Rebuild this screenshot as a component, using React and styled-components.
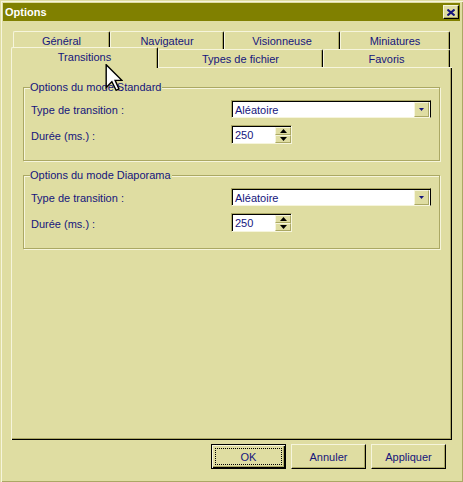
import React from "react";
import styled, { createGlobalStyle } from "styled-components";

const face = "#dfdda2";
const light = "#f6f5dc";
const shadow = "#aba864";
const dark = "#000";
const ink = "#15157c";

const GlobalStyle = createGlobalStyle`
  html, body {
    margin: 0;
    padding: 0;
    background: ${face};
  }
  body {
    font-family: "Liberation Sans", Arial, sans-serif;
    font-size: 11px;
    color: ${ink};
  }
`;

const Window = styled.div`
  position: relative;
  width: 463px;
  height: 482px;
  box-sizing: border-box;
  padding: 3px;
  background: ${face};
  box-shadow: inset 1px 1px ${face}, inset 2px 2px ${light},
    inset -1px -1px ${shadow};
  display: flex;
  flex-direction: column;
`;

const TitleBar = styled.div`
  height: 18px;
  background: #808000;
  display: flex;
  align-items: center;
  justify-content: space-between;
  padding: 0 1px 0 2px;
`;

const Title = styled.span`
  color: #fff;
  font-weight: bold;
  font-size: 11px;
`;

const CloseButton = styled.div`
  width: 16px;
  height: 14px;
  box-sizing: border-box;
  background: ${face};
  border-top: 1px solid ${light};
  border-left: 1px solid ${light};
  border-right: 1px solid ${dark};
  border-bottom: 1px solid ${dark};
  box-shadow: inset -1px -1px ${shadow};
  display: flex;
  align-items: center;
  justify-content: center;
`;

const Body = styled.div`
  flex: 1;
  padding: 10px 8px 0 8px;
  display: flex;
  flex-direction: column;
`;

const TabRow = styled.div`
  display: flex;
  height: 18px;
  padding-left: ${(p) => p.$indent || 0}px;
  align-items: flex-start;
`;

const Tab = styled.div`
  position: relative;
  width: ${(p) => p.$w}px;
  height: ${(p) => (p.$active ? 21 : 18)}px;
  margin-top: ${(p) => (p.$active ? -2 : 0)}px;
  z-index: ${(p) => (p.$active ? 2 : 0)};
  box-sizing: border-box;
  background: ${face};
  border-top: 1px solid ${light};
  border-left: 1px solid ${light};
  border-right: 1px solid ${dark};
  border-radius: 2px 2px 0 0;
  box-shadow: inset -1px 0 ${shadow};
  display: flex;
  justify-content: center;
  padding-top: 3px;
  white-space: nowrap;
`;

const Panel = styled.div`
  position: relative;
  z-index: 1;
  height: 373px;
  box-sizing: border-box;
  padding: 14px 12px 0 12px;
  box-shadow: inset 1px 1px ${light}, inset -1px -1px ${dark},
    inset -2px -2px ${shadow};
  display: flex;
  flex-direction: column;
  gap: 8px;
`;

const Group = styled.fieldset`
  margin: 0;
  padding: 6px 7px 16px 7px;
  border: 1px solid ${shadow};
  box-shadow: inset 1px 1px ${light}, 1px 1px ${light};
  display: grid;
  grid-template-columns: 200px auto;
  row-gap: 7px;
  align-items: center;
  justify-items: start;
`;

const Legend = styled.legend`
  position: relative;
  padding: 0 1px 0 0;
  margin-left: -1px;
  line-height: 13px;
  background: ${face};
`;

const Label = styled.span`
  white-space: nowrap;
  padding-top: 2px;
`;

const Combo = styled.div`
  width: 200px;
  height: 18px;
  box-sizing: border-box;
  background: #fff;
  border-top: 1px solid ${shadow};
  border-left: 1px solid ${shadow};
  border-bottom: 1px solid ${light};
  border-right: 1px solid ${dark};
  box-shadow: inset 1px 1px ${dark};
  display: flex;
  align-items: center;
  justify-content: space-between;
  padding: 1px 1px 0 3px;
`;

const DropButton = styled.div`
  width: 15px;
  height: 15px;
  box-sizing: border-box;
  background: ${face};
  border-top: 1px solid ${light};
  border-left: 1px solid ${light};
  border-right: 1px solid ${shadow};
  border-bottom: 1px solid ${shadow};
  display: flex;
  align-items: center;
  justify-content: center;
  margin-top: -1px;
`;

const Spinner = styled.div`
  display: flex;
  height: 19px;
`;

const SpinInput = styled.div`
  width: 44px;
  height: 19px;
  box-sizing: border-box;
  background: #fff;
  border-top: 1px solid ${shadow};
  border-left: 1px solid ${shadow};
  border-bottom: 1px solid ${light};
  box-shadow: inset 1px 1px ${dark};
  display: flex;
  align-items: center;
  padding: 1px 0 0 3px;
`;

const SpinButtons = styled.div`
  width: 17px;
  height: 19px;
  box-sizing: border-box;
  background: #fff;
  border-top: 1px solid ${shadow};
  border-right: 1px solid ${light};
  border-bottom: 1px solid ${light};
  box-shadow: inset 0 1px ${dark};
  padding-top: 1px;
  display: flex;
  flex-direction: column;
`;

const SpinArrow = styled.div`
  flex: 1;
  box-sizing: border-box;
  background: ${face};
  border-top: 1px solid ${light};
  border-left: 1px solid ${light};
  border-right: 1px solid ${shadow};
  border-bottom: 1px solid ${shadow};
  display: flex;
  align-items: center;
  justify-content: center;
`;

const Footer = styled.div`
  display: flex;
  justify-content: flex-end;
  gap: 5px;
  padding: 4px 6px 0 0;
`;

const Button = styled.div`
  width: 75px;
  height: 25px;
  box-sizing: border-box;
  background: ${face};
  border-top: 1px solid ${(p) => (p.$default ? dark : light)};
  border-left: 1px solid ${(p) => (p.$default ? dark : light)};
  border-right: 1px solid ${dark};
  border-bottom: 1px solid ${dark};
  box-shadow: ${(p) =>
    p.$default
      ? `inset 1px 1px ${light}, inset -1px -1px ${dark}, inset -2px -2px ${shadow}`
      : `inset -1px -1px ${shadow}`};
  display: flex;
  align-items: center;
  justify-content: center;
  padding: ${(p) => (p.$default ? 3 : 0)}px;
`;

const FocusRing = styled.div`
  flex: 1;
  align-self: stretch;
  border: 1px dotted ${dark};
  display: flex;
  align-items: center;
  justify-content: center;
`;

const Cursor = styled.svg`
  position: absolute;
  left: 105px;
  top: 64px;
  z-index: 10;
`;

const ComboBox = ({ value }) => (
  <Combo>
    <span>{value}</span>
    <DropButton>
      <svg width="5" height="3" viewBox="0 0 5 3">
        <path d="M0 0h5L2.5 3z" fill={ink} />
      </svg>
    </DropButton>
  </Combo>
);

const SpinBox = ({ value }) => (
  <Spinner>
    <SpinInput>{value}</SpinInput>
    <SpinButtons>
      <SpinArrow>
        <svg width="7" height="4" viewBox="0 0 7 4">
          <path d="M3.5 0L7 4H0z" fill={dark} />
        </svg>
      </SpinArrow>
      <SpinArrow>
        <svg width="7" height="4" viewBox="0 0 7 4">
          <path d="M0 0h7L3.5 4z" fill={dark} />
        </svg>
      </SpinArrow>
    </SpinButtons>
  </Spinner>
);

const ModeGroup = ({ title }) => (
  <Group>
    <Legend>{title}</Legend>
    <Label>Type de transition :</Label>
    <ComboBox value="Aléatoire" />
    <Label>Durée (ms.) :</Label>
    <SpinBox value="250" />
  </Group>
);

export default function App() {
  return (
    <>
      <GlobalStyle />
      <Window>
        <TitleBar>
          <Title>Options</Title>
          <CloseButton>
            <svg width="8" height="7" viewBox="0 0 8 7">
              <path d="M0.5 0.5L7.5 6.5M7.5 0.5L0.5 6.5" stroke={ink} strokeWidth="2" />
            </svg>
          </CloseButton>
        </TitleBar>
        <Body>
          <TabRow $indent={2}>
            <Tab $w={97}>Général</Tab>
            <Tab $w={114}>Navigateur</Tab>
            <Tab $w={116}>Visionneuse</Tab>
            <Tab $w={110}>Miniatures</Tab>
          </TabRow>
          <TabRow>
            <Tab $w={147} $active>
              Transitions
            </Tab>
            <Tab $w={165}>Types de fichier</Tab>
            <Tab $w={127}>Favoris</Tab>
          </TabRow>
          <Panel>
            <ModeGroup title="Options du mode Standard" />
            <ModeGroup title="Options du mode Diaporama" />
          </Panel>
          <Footer>
            <Button $default>
              <FocusRing>OK</FocusRing>
            </Button>
            <Button>Annuler</Button>
            <Button>Appliquer</Button>
          </Footer>
        </Body>
        <Cursor width="18" height="27" viewBox="0 0 12 19">
          <path
            d="M0.5 0.5V16.5L4.5 12.5L7.5 18.5L9.5 17.5L6.8 11.5H11.5Z"
            fill="#fff"
            stroke="#000"
            strokeWidth="1"
          />
        </Cursor>
      </Window>
    </>
  );
}
